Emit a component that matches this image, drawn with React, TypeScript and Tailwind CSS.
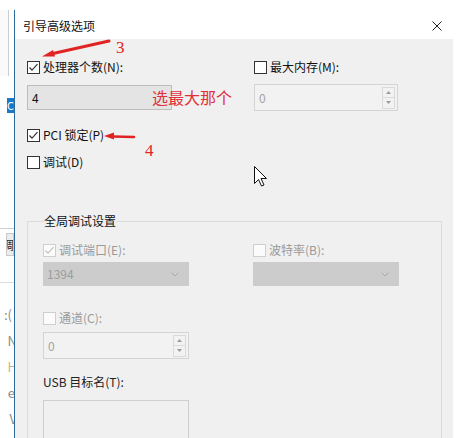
import React from "react";

const FONT = "font-['Microsoft_YaHei_UI','Noto_Sans_CJK_SC',sans-serif]";

function Check({ checked, disabled }: { checked?: boolean; disabled?: boolean }) {
    const box = disabled ? "border-[#cfcfcf] bg-[#fbfbfb]" : "border-[#333333] bg-white";
    const mark = disabled ? "#c2c2c2" : "#333333";
    return (
        <span className={`w-[13px] h-[13px] border flex-shrink-0 flex items-center justify-center ${box}`}>
            {checked && (
                <svg width="11" height="11" viewBox="0 0 11 11">
                    <polyline points="1.5,5.5 4,8.2 9.5,2.2" fill="none" stroke={mark} strokeWidth="1.2" />
                </svg>
            )}
        </span>
    );
}

function CheckRow({ label, checked, disabled }: { label: string; checked?: boolean; disabled?: boolean }) {
    return (
        <div className="flex items-center gap-[3px] h-[14px]">
            <Check checked={checked} disabled={disabled} />
            <span className={`text-[12px] leading-[14px] ${disabled ? "text-[#9a9a9a]" : "text-[#111111]"}`}>
                {label}
            </span>
        </div>
    );
}

/**
 * Caja numérica con flechitas (deshabilitada).
 */
function Spinner({ value, w, h }: { value: string; w: string; h: string }) {
    return (
        <div className={`${w} ${h} border border-[#d4d4d4] bg-[#f2f2f2] flex items-center justify-between pl-[4px] pr-[2px]`}>
            <span className="text-[12px] text-[#a3a3a3]">{value}</span>
            <div className="flex flex-col w-[13px] h-[22px] border border-[#dadada]">
                <div className="flex-1 flex items-center justify-center border-b border-[#dadada]">
                    <svg width="5" height="3" viewBox="0 0 5 3"><polygon points="0,3 2.5,0 5,3" fill="#9a9a9a" /></svg>
                </div>
                <div className="flex-1 flex items-center justify-center">
                    <svg width="5" height="3" viewBox="0 0 5 3"><polygon points="0,0 2.5,3 5,0" fill="#9a9a9a" /></svg>
                </div>
            </div>
        </div>
    );
}

function Combo({ value }: { value?: string }) {
    return (
        <div className="w-[146px] h-[24px] bg-[#cccccc] flex items-center justify-between pl-[4px] pr-[10px]">
            <span className="text-[12px] text-[#9c9c9c]">{value}</span>
            <svg width="8" height="5" viewBox="0 0 8 5">
                <polyline points="0.5,0.5 4,4 7.5,0.5" fill="none" stroke="#acacac" strokeWidth="1" />
            </svg>
        </div>
    );
}

export default function App() {
    return (
        <div className={`w-[463px] h-[438px] flex bg-white overflow-hidden ${FONT}`}>
            {/* Ventana de fondo (recortada) */}
            <div className="w-[14px] flex-shrink-0 flex flex-col bg-white overflow-hidden text-[12px] leading-[14px]">
                <div className="h-[10px] flex-shrink-0" />
                <div className="w-[9px] h-[66px] flex-shrink-0 border-r border-[#cdcdcd] bg-[#fafafa]" />
                <div className="h-[22px] flex-shrink-0" />
                <div className="ml-[7px] w-[7px] h-[15px] flex-shrink-0 bg-[#1c78c8] text-white text-[11px] leading-[15px] overflow-hidden">C</div>
                <div className="h-[115px] flex-shrink-0" />
                <div className="h-[1px] flex-shrink-0 bg-[#cfcfcf]" />
                <div className="h-[4px] flex-shrink-0" />
                <div className="ml-[6px] h-[23px] flex-shrink-0 border border-[#c9c9c9] bg-[#ececec] text-[#222] flex items-center overflow-hidden">
                    <span className="ml-[-5px]">调</span>
                </div>
                <div className="h-[26px] flex-shrink-0" />
                <div className="h-[1px] flex-shrink-0 bg-[#dcdcdc]" />
                <div className="h-[25px] flex-shrink-0" />
                <div className="flex flex-col items-end gap-[12px] text-[#8a8a8a] text-[13px]">
                    <span className="mr-[2px]">:(</span>
                    <span className="mr-[-3px]">N</span>
                    <span className="mr-[-3px] text-[#c9b38a]">H</span>
                    <span className="mr-[-1px]">e</span>
                    <span className="mr-[-3px]">V</span>
                </div>
            </div>
            <div className="w-[1px] flex-shrink-0 mt-[10px] bg-[#2a6a9e]" />

            {/* Diálogo */}
            <div className="w-[438px] flex-shrink-0 flex flex-col">
                <div className="h-[39px] flex-shrink-0 bg-white flex items-center justify-between pl-[8px] pr-[11px] pt-[13px]">
                    <span className="text-[12px] text-[#111]">引导高级选项</span>
                    <svg width="10" height="10" viewBox="0 0 10 10">
                        <path d="M0.5 0.5 L9.5 9.5 M9.5 0.5 L0.5 9.5" stroke="#222" strokeWidth="1" />
                    </svg>
                </div>

                <div className="flex-1 min-h-0 overflow-hidden bg-[#f0f0f0] pl-[12px] pr-[11px] pt-[21px] relative">
                    <div className="grid grid-cols-[227px_1fr]">
                        <CheckRow label="处理器个数(N):" checked />
                        <CheckRow label="最大内存(M):" />
                    </div>
                    <div className="grid grid-cols-[227px_1fr] mt-[10px] items-start">
                        <div className="w-[145px] h-[25px] mt-[1px] border border-[#bdbdbd] bg-[#e4e4e4] flex items-center pl-[4px]">
                            <span className="text-[12px] text-[#111]">4</span>
                        </div>
                        <Spinner value="0" w="w-[144px]" h="h-[27px]" />
                    </div>
                    <div className="mt-[17px]">
                        <CheckRow label="PCI 锁定(P)" checked />
                    </div>
                    <div className="mt-[13px]">
                        <CheckRow label="调试(D)" />
                    </div>

                    <fieldset className="mt-[45px] h-[260px] border border-[#dcdcdc] pl-[15px]">
                        <legend className="ml-[1px] text-[12px] leading-[14px] text-[#111]">全局调试设置</legend>
                        <div className="grid grid-cols-[210px_1fr] mt-[15px]">
                            <CheckRow label="调试端口(E):" checked disabled />
                            <CheckRow label="波特率(B):" disabled />
                        </div>
                        <div className="grid grid-cols-[210px_1fr] mt-[5px]">
                            <Combo value="1394" />
                            <Combo />
                        </div>
                        <div className="mt-[25px]">
                            <CheckRow label="通道(C):" disabled />
                        </div>
                        <div className="mt-[7px]">
                            <Spinner value="0" w="w-[146px]" h="h-[27px]" />
                        </div>
                        <div className="mt-[16px] text-[12px] leading-[14px] text-[#222]">USB 目标名(T):</div>
                        <div className="mt-[11px] w-[146px] h-[40px] border border-[#cfcfcf] bg-[#f0f0f0]" />
                    </fieldset>

                    {/* Anotaciones rojas */}
                    <svg className="absolute left-0 top-0 pointer-events-none" width="438" height="200" viewBox="0 0 438 200">
                        <path d="M94 2 L38 14.5" stroke="#e02424" strokeWidth="3" strokeLinecap="round" />
                        <polygon points="27,17.5 38,11 40,17.5" fill="#e02424" />
                        <path d="M119 98 L98 97.5" stroke="#e02424" strokeWidth="2.5" strokeLinecap="round" />
                        <polygon points="89,97 99,93.5 99,100.5" fill="#e02424" />
                        {/* Cursor */}
                        <path
                            d="M239.5 127.5 L239.5 144.5 L243.5 140.5 L246.5 147 L249 146 L246 139.5 L251.5 139.5 Z"
                            fill="white"
                            stroke="#111"
                            strokeWidth="1"
                            strokeLinejoin="round"
                        />
                    </svg>
                    <span className="absolute left-[101px] top-[0px] text-[17px] leading-[17px] text-[#e02424] font-['Liberation_Serif',serif]">3</span>
                    <span className="absolute left-[130px] top-[103px] text-[17px] leading-[17px] text-[#e02424] font-['Liberation_Serif',serif]">4</span>
                    <span className="absolute left-[137px] top-[48px] text-[16px] leading-[20px] text-[#e0303a]">选最大那个</span>
                </div>
            </div>
            <div className="w-[10px] flex-shrink-0 bg-white" />
        </div>
    );
}
